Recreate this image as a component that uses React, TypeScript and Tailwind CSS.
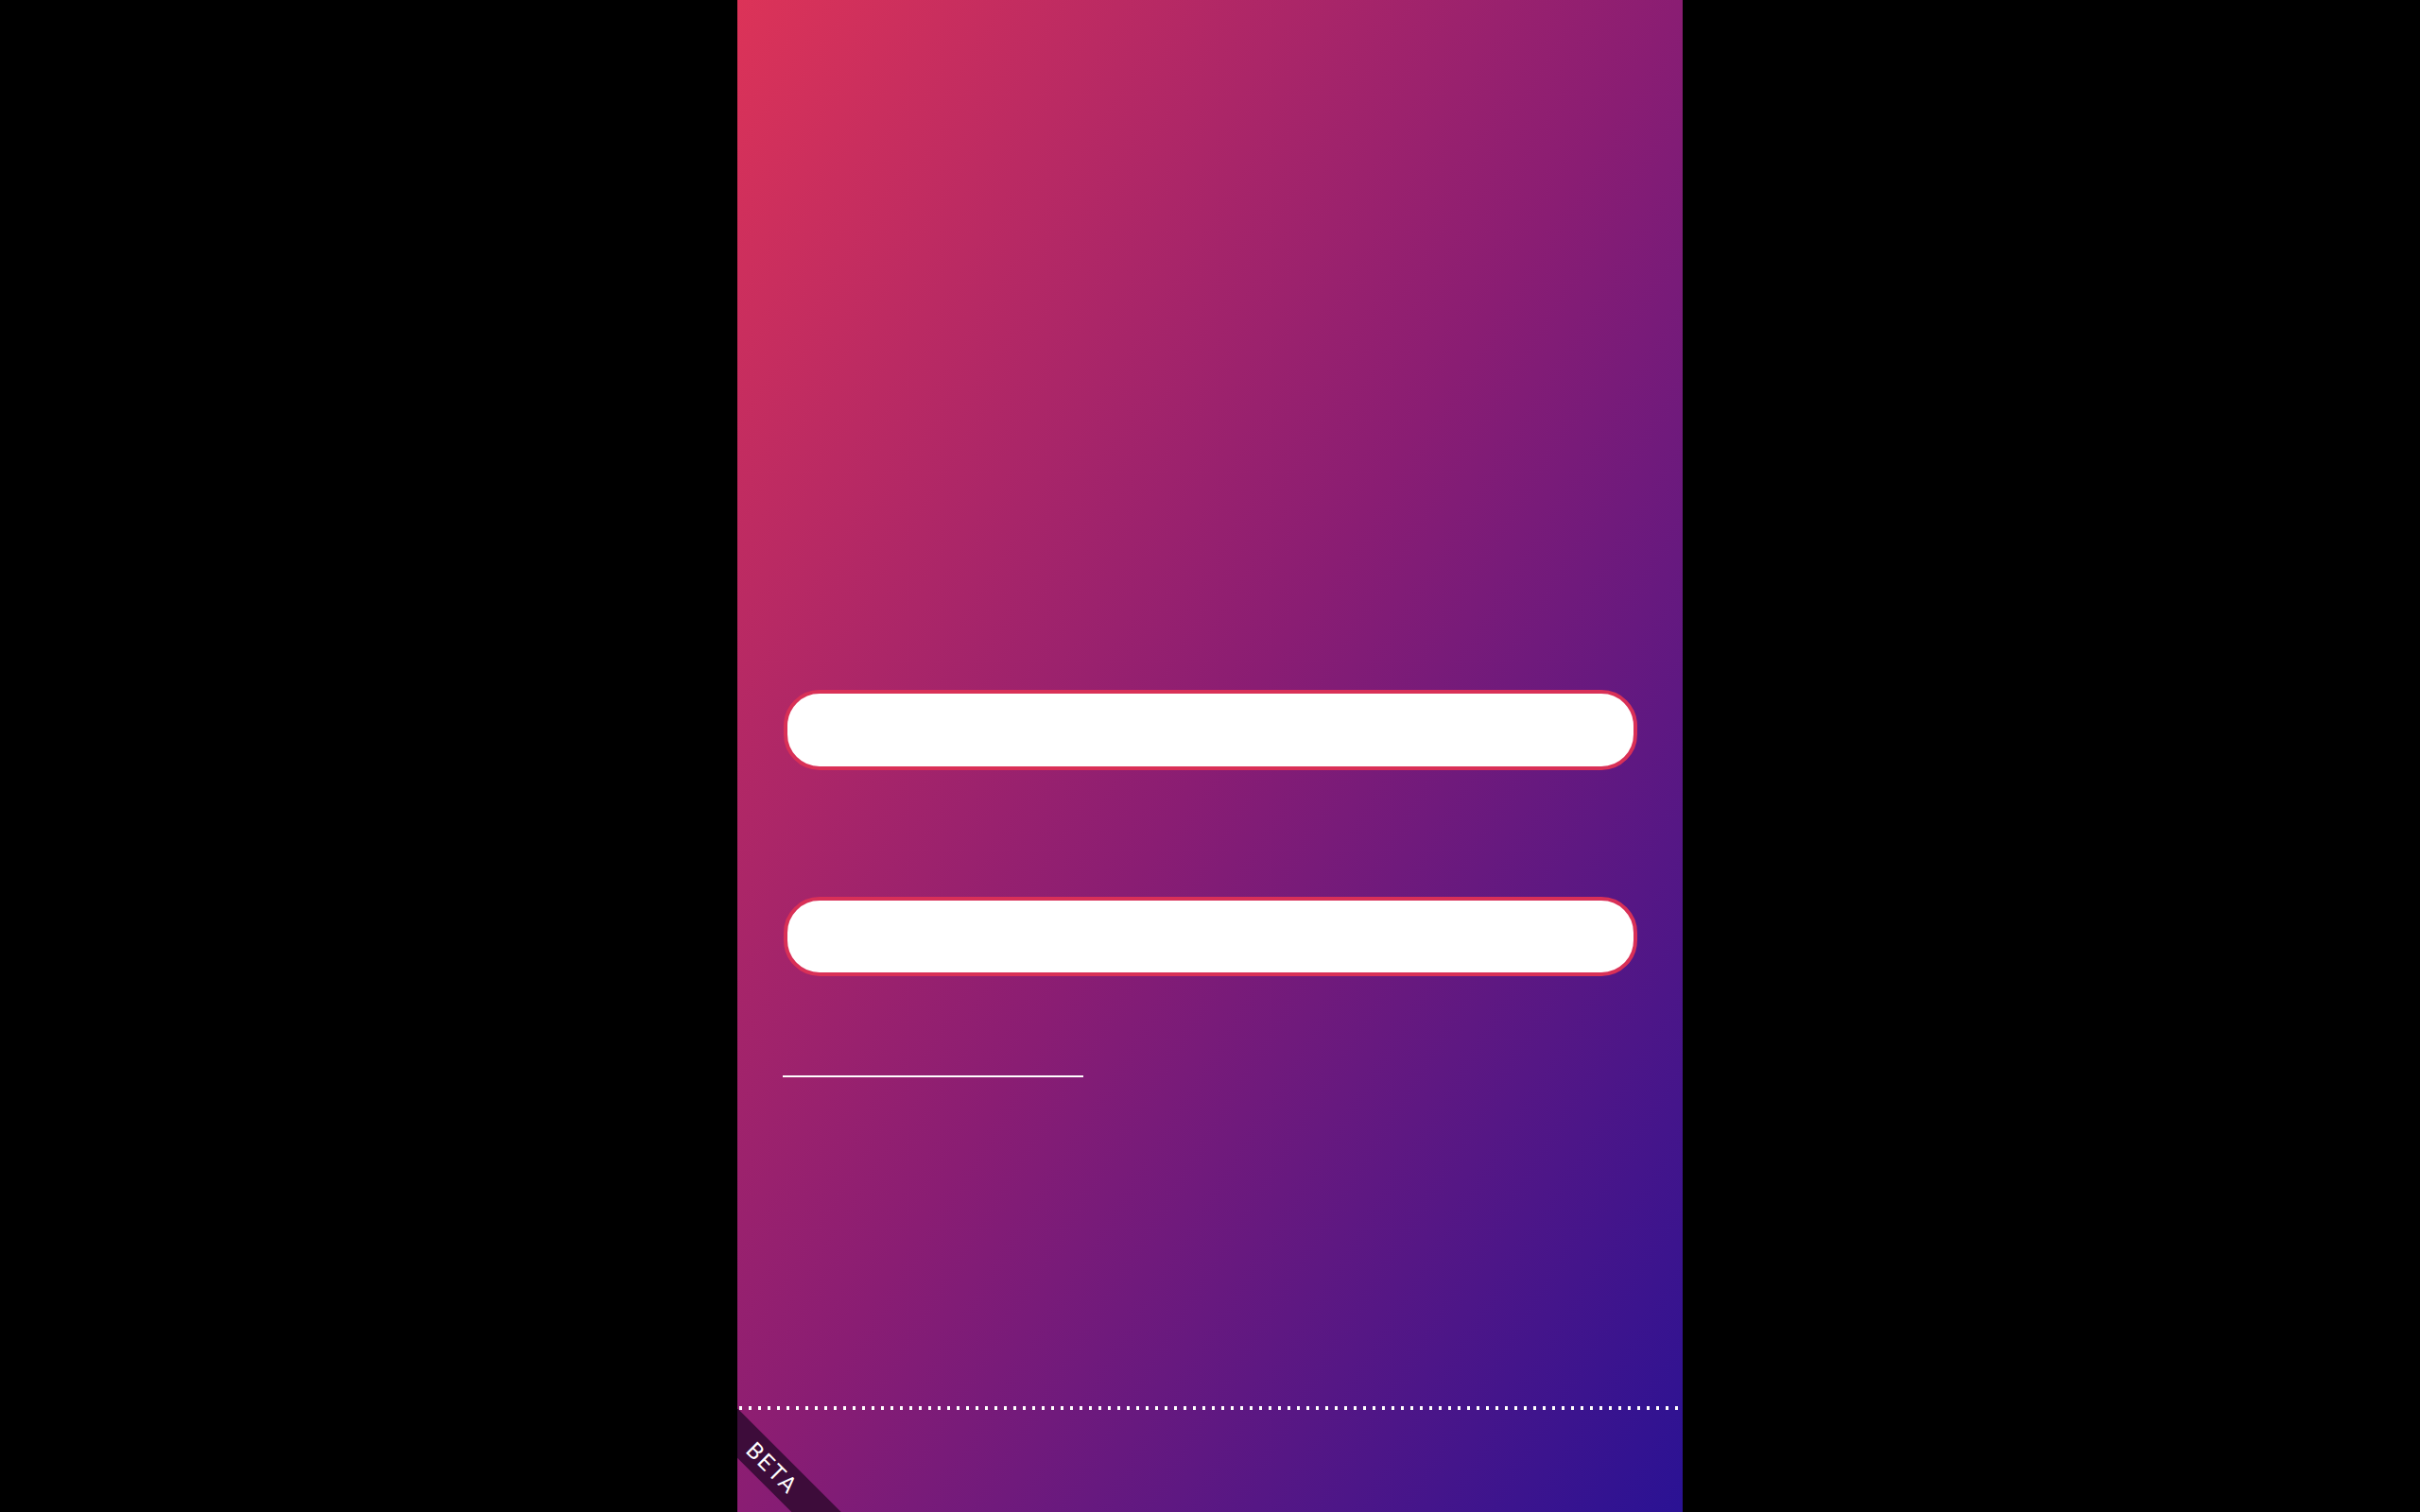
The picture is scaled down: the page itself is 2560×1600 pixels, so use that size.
import React from 'react';

function App() {
  return (
    <div className="min-h-screen w-full bg-black flex justify-center">
      <div className="relative w-[1000px] h-[1600px] overflow-hidden bg-[linear-gradient(to_bottom_right,#dc3358,#8a1d73,#2a1294)] font-['Roboto',sans-serif]">
        <div className="flex flex-col pt-[730px] pl-[49px] pr-[48px]">
          {/* Inputs */}
          <input
            type="text"
            className="w-full h-[85px] rounded-[38px] border-4 border-[#d93057] bg-white outline-none px-8 text-2xl"
          />
          <input
            type="password"
            className="mt-[134px] w-full h-[84px] rounded-[38px] border-4 border-[#d93057] bg-white outline-none px-8 text-2xl"
          />
          <div className="mt-[105px] ml-[-1px] w-[318px] h-[2px] bg-white"></div>
        </div>

        {/* dotted separator */}
        <div className="mt-[348px] h-[4px] w-full bg-[repeating-linear-gradient(90deg,transparent_0px,transparent_2px,white_2px,white_5px,transparent_5px,transparent_10px)]"></div>

        {/* beta ribbon */}
        <div className="absolute left-[-73px] top-[1535px] w-[220px] h-[37px] rotate-45 bg-[#3d0c3a] flex items-center justify-center">
          <span className="text-white text-[24px] tracking-[2px] leading-none">BETA</span>
        </div>
      </div>
    </div>
  );
}

export default App;
